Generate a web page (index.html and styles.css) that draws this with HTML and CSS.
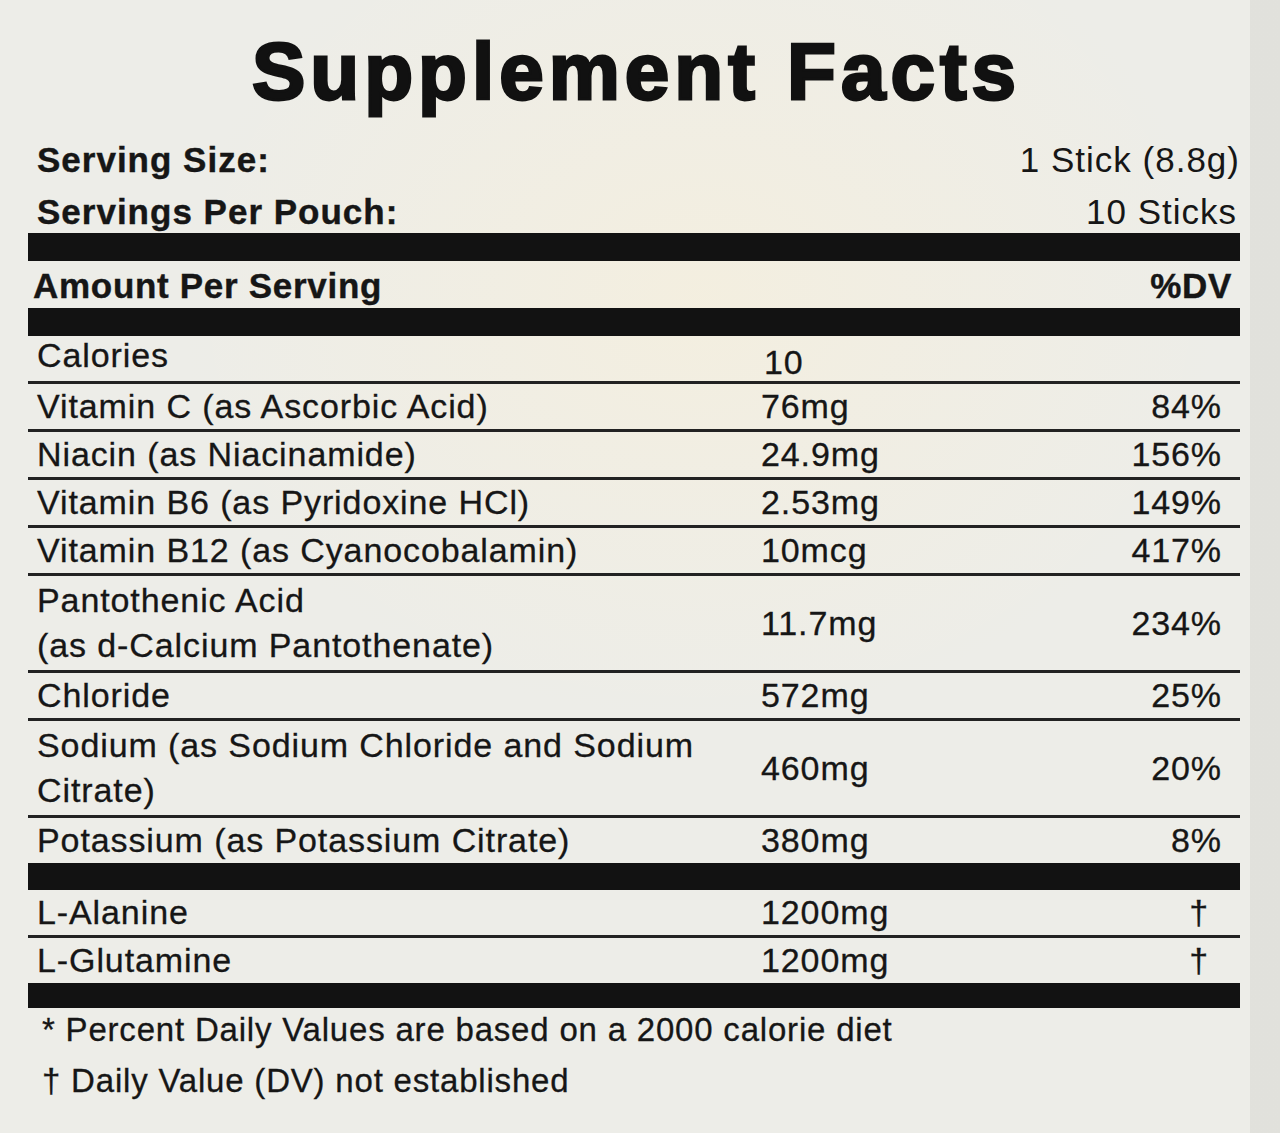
FILE: index.html
```html
<!DOCTYPE html>
<html lang="en">
<head>
<meta charset="utf-8">
<title>Supplement Facts</title>
<link rel="stylesheet" href="styles.css">
</head>
<body>
<div class="page">
  <div class="label">
    <h1 class="title">Supplement Facts</h1>

    <div class="serving">
      <div class="serving-row">
        <span class="serving-key">Serving Size:</span>
        <span class="serving-val">1 Stick (8.8g)</span>
      </div>
      <div class="serving-row">
        <span class="serving-key">Servings Per Pouch:</span>
        <span class="serving-val serving-val-2">10 Sticks</span>
      </div>
    </div>

    <div class="bar bar-top"></div>

    <div class="amount-head">
      <span>Amount Per Serving</span>
      <span>%DV</span>
    </div>

    <div class="bar bar-top"></div>

    <div class="facts">
      <div class="fact fact-calories">
        <span class="fact-name">Calories</span>
        <span class="fact-amt">10</span>
        <span class="fact-dv"></span>
      </div>
      <div class="fact">
        <span class="fact-name">Vitamin C (as Ascorbic Acid)</span>
        <span class="fact-amt">76mg</span>
        <span class="fact-dv">84%</span>
      </div>
      <div class="fact">
        <span class="fact-name">Niacin (as Niacinamide)</span>
        <span class="fact-amt">24.9mg</span>
        <span class="fact-dv">156%</span>
      </div>
      <div class="fact">
        <span class="fact-name">Vitamin B6 (as Pyridoxine HCl)</span>
        <span class="fact-amt">2.53mg</span>
        <span class="fact-dv">149%</span>
      </div>
      <div class="fact">
        <span class="fact-name">Vitamin B12 (as Cyanocobalamin)</span>
        <span class="fact-amt">10mcg</span>
        <span class="fact-dv">417%</span>
      </div>
      <div class="fact fact-tall">
        <span class="fact-name">Pantothenic Acid<br>(as d-Calcium Pantothenate)</span>
        <span class="fact-amt">11.7mg</span>
        <span class="fact-dv">234%</span>
      </div>
      <div class="fact">
        <span class="fact-name">Chloride</span>
        <span class="fact-amt">572mg</span>
        <span class="fact-dv">25%</span>
      </div>
      <div class="fact fact-tall">
        <span class="fact-name">Sodium (as Sodium Chloride and Sodium<br>Citrate)</span>
        <span class="fact-amt">460mg</span>
        <span class="fact-dv">20%</span>
      </div>
      <div class="fact fact-last">
        <span class="fact-name">Potassium (as Potassium Citrate)</span>
        <span class="fact-amt">380mg</span>
        <span class="fact-dv">8%</span>
      </div>
    </div>

    <div class="bar bar-mid"></div>

    <div class="facts">
      <div class="fact">
        <span class="fact-name">L-Alanine</span>
        <span class="fact-amt">1200mg</span>
        <span class="fact-dv fact-dagger">†</span>
      </div>
      <div class="fact fact-last">
        <span class="fact-name">L-Glutamine</span>
        <span class="fact-amt">1200mg</span>
        <span class="fact-dv fact-dagger">†</span>
      </div>
    </div>

    <div class="bar bar-end"></div>

    <div class="notes">
      <p class="note">* Percent Daily Values are based on a 2000 calorie diet</p>
      <p class="note">† Daily Value (DV) not established</p>
    </div>
  </div>
</div>
</body>
</html>
```

FILE: styles.css
```css
html, body {
  margin: 0;
  padding: 0;
}

body {
  background-color: #edede8;
  background-image:
    linear-gradient(to right, rgba(0,0,0,0) 1250px, rgba(120,120,115,0.10) 1250px),
    radial-gradient(ellipse 520px 420px at 700px 300px, rgba(250,240,215,0.5), rgba(250,240,215,0) 100%);
  color: #161616;
  font-family: "Liberation Sans", Arial, sans-serif;
}

.page {
  width: 1280px;
  min-height: 1133px;
  padding-top: 32px;
  box-sizing: border-box;
}

.label {
  margin-left: 28px;
  width: 1212px;
}

.title {
  margin: 0;
  font-size: 80px;
  line-height: 80px;
  font-weight: 700;
  letter-spacing: 5px;
  text-align: center;
  color: #111;
  -webkit-text-stroke: 2.8px #111;
  padding-left: 5px;
}

.serving {
  margin-top: 28px;
  padding-left: 9px;
  display: flex;
  flex-direction: column;
  gap: 12px;
}

.serving-row {
  display: flex;
  justify-content: space-between;
  align-items: baseline;
  line-height: 40px;
}

.serving-key {
  font-size: 35px;
  font-weight: 700;
  letter-spacing: 1px;
  -webkit-text-stroke: 0.4px #161616;
}

.serving-val {
  font-size: 35px;
  letter-spacing: 1px;
}

.serving-val-2 {
  padding-right: 3px;
}

.bar {
  background: #121212;
}

.bar-top {
  height: 28px;
  margin-top: 1px;
}

.amount-head {
  margin-top: 5px;
  margin-bottom: 2px;
  padding-left: 5px;
  padding-right: 8px;
  display: flex;
  justify-content: space-between;
  font-size: 35px;
  font-weight: 700;
  letter-spacing: 0.7px;
  line-height: 40px;
  -webkit-text-stroke: 0.4px #161616;
}

.facts {
  display: flex;
  flex-direction: column;
}

.fact {
  display: grid;
  grid-template-columns: 724px 1fr auto;
  align-items: center;
  min-height: 45px;
  padding-left: 9px;
  padding-right: 18px;
  border-bottom: 3px solid #222;
  font-size: 34px;
  letter-spacing: 0.9px;
  line-height: 45px;
  -webkit-text-stroke: 0.3px #161616;
}

.fact-tall {
  padding-top: 2px;
  padding-bottom: 2px;
}

.fact-last {
  border-bottom: none;
}

.fact-dv {
  text-align: right;
}

.fact-dagger {
  padding-right: 13px;
}

.fact-calories .fact-name {
  align-self: start;
  line-height: 38px;
}

.fact-calories .fact-amt {
  align-self: end;
  line-height: 38px;
  padding-left: 3px;
}

.bar-mid {
  height: 27px;
}

.bar-end {
  height: 25px;
}

.notes {
  padding-left: 14px;
  display: flex;
  flex-direction: column;
  gap: 7px;
}

.note {
  margin: 0;
  font-size: 33px;
  line-height: 44px;
  letter-spacing: 0.8px;
  -webkit-text-stroke: 0.3px #161616;
}
```
